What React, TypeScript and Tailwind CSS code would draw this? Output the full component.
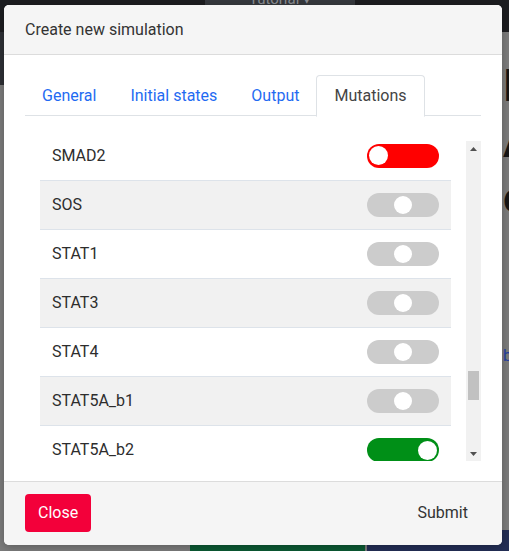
import React from 'react';

type Mut = 'ko' | 'none' | 'oe';

const rows: { name: string; state: Mut }[] = [
  { name: 'SMAD2', state: 'ko' },
  { name: 'SOS', state: 'none' },
  { name: 'STAT1', state: 'none' },
  { name: 'STAT3', state: 'none' },
  { name: 'STAT4', state: 'none' },
  { name: 'STAT5A_b1', state: 'none' },
  { name: 'STAT5A_b2', state: 'oe' },
  { name: 'STAT6', state: 'none' },
];

const Toggle: React.FC<{ state: Mut }> = ({ state }) => {
  if (state === 'ko') {
    return (
      <div className="w-[72px] h-[24px] rounded-full bg-[#ff0000] flex items-center px-[2px]">
        <div className="w-[19px] h-[19px] rounded-full bg-white" />
      </div>
    );
  }
  if (state === 'oe') {
    return (
      <div className="w-[72px] h-[24px] rounded-full bg-[#008f17] flex items-center justify-end px-[2px]">
        <div className="w-[19px] h-[19px] rounded-full bg-white" />
      </div>
    );
  }
  return (
    <div className="w-[72px] h-[24px] rounded-full bg-[#cccccc] flex items-center justify-center">
      <div className="w-[18px] h-[18px] rounded-full bg-white" />
    </div>
  );
};

const tabs = ['General', 'Initial states', 'Output', 'Mutations'];

export default function App() {
  return (
    <div
      className="relative w-[509px] h-[551px] overflow-hidden bg-[#7b7b7b]"
      style={{ fontFamily: 'Roboto, "Liberation Sans", sans-serif' }}
    >
      {/* background page behind the overlay */}
      <div className="h-[32px] bg-[#1c1d20] flex">
        <div className="ml-[205px] w-[150px] bg-[#35383d] flex items-start justify-center">
          <span className="text-[15px] leading-none -mt-[8px] text-[#8a8d92]">Tutorial ▾</span>
        </div>
      </div>
      <div className="w-[4px] h-[53px] bg-[#2e3035]" />
      <div className="absolute left-[503px] top-[58px] text-[44px] font-bold leading-[56px] text-[#151515]">
        <div>I</div>
        <div>A</div>
        <div>e</div>
      </div>
      <div className="absolute left-[503px] top-[344px] text-[16px] text-[#2540a0]">b</div>
      <div className="absolute left-[190px] top-[535px] w-[175px] h-[20px] bg-[#0b5a33]" />
      <div className="absolute left-[367px] top-[530px] w-[142px] h-[25px] bg-[#232e55]" />

      {/* modal */}
      <div className="absolute left-[4px] top-[5px] w-[498px] h-[540px] bg-white rounded-[5px] overflow-hidden flex flex-col shadow-[0_2px_8px_rgba(0,0,0,0.25)]">
        <div className="h-[50px] bg-[#f5f5f5] border-b border-[#dcdcdc] px-[21px] flex items-center">
          <span className="text-[16px] text-[#333333]">Create new simulation</span>
        </div>

        <div className="flex-1 px-[21px] pt-[20px]">
          <div className="flex border-b border-[#dee2e6] h-[41px]">
            {tabs.map((t) =>
              t === 'Mutations' ? (
                <div
                  key={t}
                  className="px-[17px] h-[42px] -mb-px border border-[#dee2e6] border-b-white bg-white rounded-t-[4px] flex items-center text-[16px] text-[#444444]"
                >
                  {t}
                </div>
              ) : (
                <div key={t} className="px-[17px] flex items-center pt-[2px] text-[16px] text-[#1f6bf2]">
                  {t}
                </div>
              )
            )}
          </div>

          <div className="mt-[25px] pl-[15px] flex h-[320px]">
            <div className="w-[411px] h-[320px] overflow-hidden">
              <div className="-mt-[10px]">
                {rows.map((r, i) => (
                  <div
                    key={r.name}
                    className={`h-[49px] flex items-center justify-between pl-[12px] pr-[12px] ${
                      i > 0 ? 'border-t border-[#dde3ea]' : ''
                    } ${i % 2 === 1 ? 'bg-[#f1f1f1]' : 'bg-white'}`}
                  >
                    <span className="text-[16px] text-[#2d2d2d]">{r.name}</span>
                    <Toggle state={r.state} />
                  </div>
                ))}
              </div>
            </div>
            {/* scrollbar */}
            <div className="ml-[15px] w-[15px] h-[320px] bg-[#f1f1f1] flex flex-col items-center">
              <div className="h-[15px] flex items-center justify-center">
                <svg width="7" height="4" viewBox="0 0 7 4">
                  <path d="M0 4 L3.5 0 L7 4 Z" fill="#505050" />
                </svg>
              </div>
              <div className="flex-1 w-full flex flex-col items-center">
                <div className="h-[215px]" />
                <div className="w-[11px] h-[29px] bg-[#c1c1c1]" />
              </div>
              <div className="h-[15px] flex items-center justify-center">
                <svg width="7" height="4" viewBox="0 0 7 4">
                  <path d="M0 0 L3.5 4 L7 0 Z" fill="#505050" />
                </svg>
              </div>
            </div>
          </div>
        </div>

        <div className="h-[64px] bg-[#f5f5f5] border-t border-[#dcdcdc] px-[21px] pb-[2px] flex items-center justify-between">
          <button className="h-[38px] px-[13px] rounded-[4px] bg-[#f3003a] text-white text-[16px]">Close</button>
          <button className="h-[38px] px-[13px] text-[16px] text-[#333333]">Submit</button>
        </div>
      </div>
    </div>
  );
}
